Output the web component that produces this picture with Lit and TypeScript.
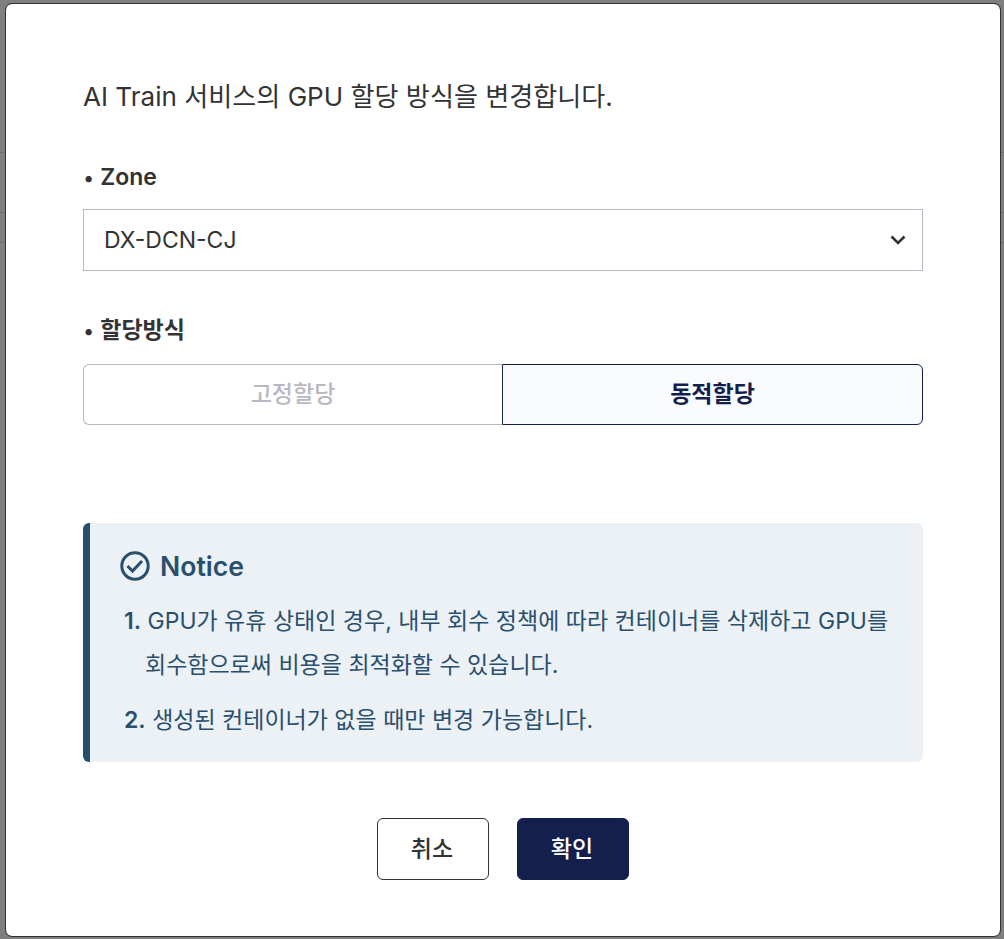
import { LitElement, html, css } from "lit";
import { customElement } from "lit/decorators.js";

@customElement("app-root")
class AppRoot extends LitElement {
  static styles = css`
    :host {
      display: block;
      height: 939px;
      overflow: hidden;
      box-sizing: border-box;
      padding: 4px 4px 3px 6px;
      background:
        linear-gradient(#6e6e6e, #6e6e6e) 0 152px / 100% 1px no-repeat,
        linear-gradient(#6e6e6e, #6e6e6e) 0 212px / 100% 1px no-repeat,
        linear-gradient(#6e6e6e, #6e6e6e) 0 242px / 100% 1px no-repeat,
        #7f7f7f;
      font-family: Inter, "Noto Sans CJK KR", sans-serif;
      color: #333;
    }
    .modal {
      box-sizing: border-box;
      height: 932px;
      padding: 72px 77px 0;
      background: #fff;
      border-radius: 6px;
      outline: 1px solid #333;
    }
    .desc {
      font-size: 26.1px;
      line-height: 40px;
      height: 40px;
      margin-top: 1px;
    }
    .label {
      margin-top: 44px;
      font-size: 23px;
      font-weight: 600;
      line-height: 32px;
      height: 32px;
    }
    .label::before {
      content: "•";
      font-size: 20px;
      font-weight: 400;
      margin-right: 6px;
    }
    .select {
      box-sizing: border-box;
      display: flex;
      align-items: center;
      justify-content: space-between;
      height: 62px;
      margin-top: 16px;
      padding: 0 16px 0 20px;
      border: 1px solid #b9b8c2;
      font-size: 23px;
    }
    .select svg { display: block; }
    .label.second { margin-top: 43px; }
    .toggle {
      display: grid;
      grid-template-columns: 419px 421px;
      height: 61px;
      margin-top: 18px;
    }
    .opt {
      box-sizing: border-box;
      display: flex;
      align-items: center;
      justify-content: center;
      padding-bottom: 6px;
      font-size: 23px;
      font-weight: 500;
    }
    .opt.off {
      border: 1px solid #b9b8c2;
      border-right: 0;
      border-radius: 6px 0 0 6px;
      color: #b9b8c2;
    }
    .opt.on {
      border: 1px solid #141f4d;
      border-radius: 0 6px 6px 0;
      background: #fafbfd;
      color: #141f4d;
      font-weight: 600;
    }
    .notice {
      box-sizing: border-box;
      height: 239px;
      margin-top: 98px;
      padding: 25px 30px 0;
      border-left: 7px solid #2a4f6d;
      border-radius: 6px;
      background: #ecf1f6;
      color: #2a4f6d;
    }
    .notice h4 {
      display: flex;
      align-items: center;
      gap: 10px;
      height: 35px;
      margin: 0;
      font-size: 26.6px;
      font-weight: 600;
    }
    .notice ol {
      margin: 16px 0 0;
      padding: 0;
      list-style: none;
      font-size: 23px;
      line-height: 44px;
    }
    .notice li { padding-left: 25px; text-indent: -21px; margin-bottom: 11px; }
    .notice b { font-weight: 600; }
    .actions {
      display: flex;
      justify-content: center;
      gap: 28px;
      margin-top: 56px;
    }
    .btn {
      box-sizing: border-box;
      width: 112px;
      height: 62px;
      padding: 0 2px 4px 0;
      border-radius: 6px;
      border: 1px solid #333;
      background: #fff;
      color: #333;
      font: 500 23px Inter, "Noto Sans CJK KR", sans-serif;
    }
    .btn.primary {
      background: #141f4d;
      border-color: #141f4d;
      color: #fff;
    }
  `;

  render() {
    return html`
      <div class="modal">
        <div class="desc">AI Train 서비스의 GPU 할당 방식을 변경합니다.</div>
        <div class="label">Zone</div>
        <div class="select">
          <span>DX-DCN-CJ</span>
          <svg width="16" height="10" viewBox="0 0 16 10" fill="none" stroke="#333" stroke-width="2.6">
            <path d="M1.5 1.5 8 8l6.5-6.5" />
          </svg>
        </div>
        <div class="label second">할당방식</div>
        <div class="toggle">
          <div class="opt off">고정할당</div>
          <div class="opt on">동적할당</div>
        </div>
        <div class="notice">
          <h4>
            <svg width="30" height="30" viewBox="0 0 30 30" fill="none" stroke="#2a4f6d" stroke-width="3">
              <circle cx="15" cy="15" r="13.2" />
              <path d="M7.5 15 12.5 20 22 10" />
            </svg>
            Notice
          </h4>
          <ol>
            <li><b>1.</b> GPU가 유휴 상태인 경우, 내부 회수 정책에 따라 컨테이너를 삭제하고 GPU를 회수함으로써 비용을 최적화할 수 있습니다.</li>
            <li><b>2.</b> 생성된 컨테이너가 없을 때만 변경 가능합니다.</li>
          </ol>
        </div>
        <div class="actions">
          <button class="btn">취소</button>
          <button class="btn primary">확인</button>
        </div>
      </div>
    `;
  }
}
